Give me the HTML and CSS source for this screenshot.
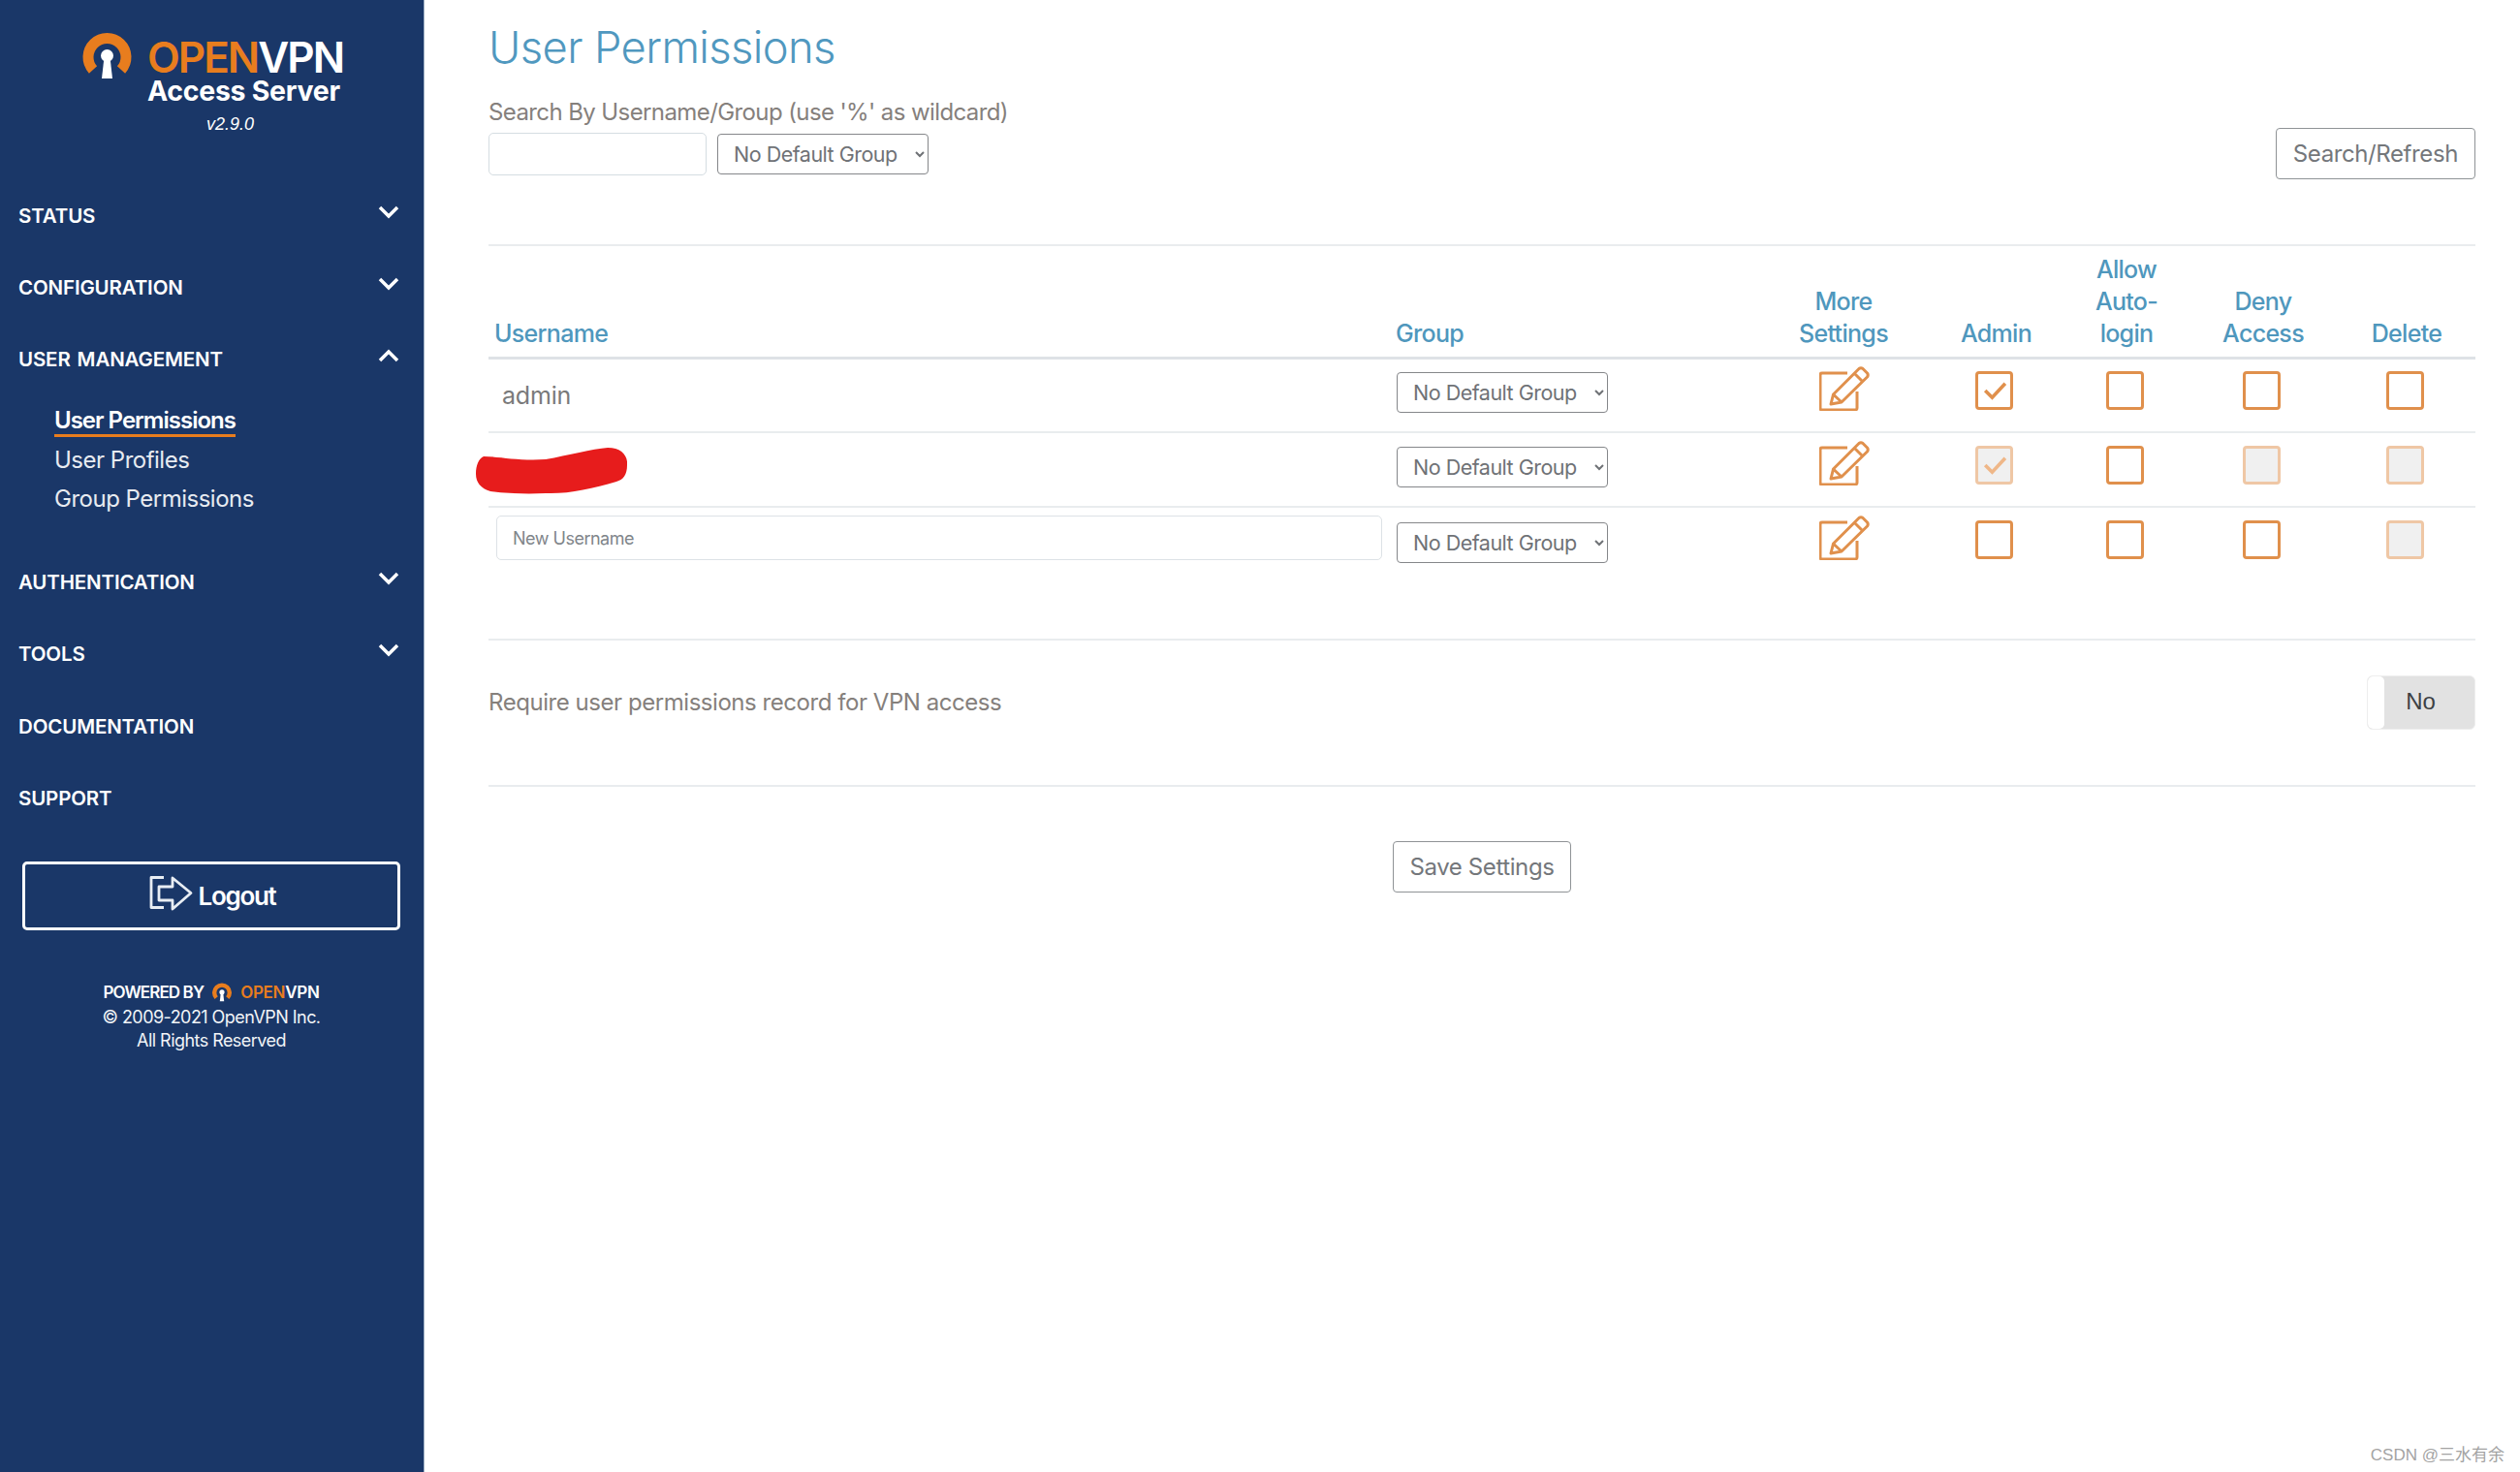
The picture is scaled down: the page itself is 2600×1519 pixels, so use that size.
FILE: index.html
```html
<!DOCTYPE html>
<html lang="en">
<head>
<meta charset="utf-8">
<title>User Permissions</title>
<link rel="stylesheet" href="styles.css">
</head>
<body>
<div class="app">
  <aside class="sidebar">
    <div class="brand">
      <svg class="ring" viewBox="0 0 50 50"><path d="M10.5 39A19.5 19.5 0 1 1 39.500 39" fill="none" stroke="#e87d1e" stroke-width="11"/><circle cx="25" cy="24.500" r="6.500" fill="#fff"/><path d="M22 26h6l2.500 22h-11z" fill="#fff"/></svg>
      <div class="brand-text">
        <div class="brand-name"><span class="orange">OPEN</span>VPN</div>
        <div class="brand-sub">Access Server</div>
      </div>
    </div>
    <div class="version">v2.9.0</div>
    <nav class="nav">
      <div class="nav-item"><span>STATUS</span><svg class="chev" viewBox="0 0 22 14"><path d="M2 2l9 9 9-9"/></svg></div>
      <div class="nav-item"><span>CONFIGURATION</span><svg class="chev" viewBox="0 0 22 14"><path d="M2 2l9 9 9-9"/></svg></div>
      <div class="nav-item"><span class="wide">USER MANAGEMENT</span><svg class="chev" viewBox="0 0 22 14"><path d="M2 12l9-9 9 9"/></svg></div>
      <div class="subnav">
        <div class="sub-item"><span class="active">User Permissions</span></div>
        <div class="sub-item">User Profiles</div>
        <div class="sub-item">Group Permissions</div>
      </div>
      <div class="nav-item"><span>AUTHENTICATION</span><svg class="chev" viewBox="0 0 22 14"><path d="M2 2l9 9 9-9"/></svg></div>
      <div class="nav-item"><span>TOOLS</span><svg class="chev" viewBox="0 0 22 14"><path d="M2 2l9 9 9-9"/></svg></div>
      <div class="nav-item"><span>DOCUMENTATION</span></div>
      <div class="nav-item"><span>SUPPORT</span></div>
    </nav>
    <div class="logout">
      <svg class="logout-icon" viewBox="0 0 46 36"><path d="M15 1.500H2v31h13"/><path d="M10 11h14V2l19 15.500L24 34v-9H10z"/></svg>
      <span>Logout</span>
    </div>
    <div class="powered">
      <div class="powered-line">POWERED BY
        <svg class="ring-small" viewBox="0 0 50 50"><path d="M10.5 39A19.5 19.5 0 1 1 39.500 39" fill="none" stroke="#e87d1e" stroke-width="11"/><circle cx="25" cy="24.500" r="6.500" fill="#fff"/><path d="M22 26h6l2.500 22h-11z" fill="#fff"/></svg>
        <span class="powered-logo"><span class="orange">OPEN</span>VPN</span>
      </div>
      <div>© 2009-2021 OpenVPN Inc.</div>
      <div>All Rights Reserved</div>
    </div>
  </aside>
  <main class="main">
    <h1 class="title">User Permissions</h1>
    <div class="search-label">Search By Username/Group (use '%' as wildcard)</div>
    <div class="search-row">
      <input class="search-input" type="text">
      <select class="select"><option>No Default Group</option></select>
      <button class="btn btn-right" type="button">Search/Refresh</button>
    </div>
    <hr class="rule rule-top">
    <table class="users">
      <thead>
        <tr>
          <th class="left c-user">Username</th>
          <th class="left c-group">Group</th>
          <th class="c-more">More<br>Settings</th>
          <th class="c-admin">Admin</th>
          <th class="c-auto">Allow<br>Auto-<br>login</th>
          <th class="c-deny">Deny<br>Access</th>
          <th class="c-del">Delete</th>
        </tr>
      </thead>
      <tbody>
        <tr>
          <td class="name">admin</td>
          <td class="grp"><select class="select"><option>No Default Group</option></select></td>
          <td><svg class="edit" viewBox="0 0 52 46"><path d="M29 7H3Q1 7 1 9v34q0 2 2 2h34q2 0 2-2V26"/><path d="M12 39l2.500-10L41 2.500q2-1.500 4 0l4.500 4.500q1.500 2 0 4L23 37zM14.500 29l8.500 8M36 7l9 9"/></svg></td>
          <td><span class="box"><svg class="tick" viewBox="0 0 32 32"><path d="M7 16l7 7L27 9"/></svg></span></td>
          <td><span class="box"></span></td>
          <td><span class="box"></span></td>
          <td><span class="box"></span></td>
        </tr>
        <tr>
          <td class="name redacted"><svg class="blob" viewBox="0 0 156 48"><path d="M8 9C25 9 45 14 72 12C95 8 120 1 136 0C150 0 157 8 156 18C156 28 152 33 145 35C120 42 95 48 72 47C50 48 30 47 15 45C5 42 0 36 0 27C0 18 3 11 8 9Z"/></svg></td>
          <td class="grp"><select class="select"><option>No Default Group</option></select></td>
          <td><svg class="edit" viewBox="0 0 52 46"><path d="M29 7H3Q1 7 1 9v34q0 2 2 2h34q2 0 2-2V26"/><path d="M12 39l2.500-10L41 2.500q2-1.500 4 0l4.500 4.500q1.500 2 0 4L23 37zM14.500 29l8.500 8M36 7l9 9"/></svg></td>
          <td><span class="box off"><svg class="tick" viewBox="0 0 32 32"><path d="M7 16l7 7L27 9"/></svg></span></td>
          <td><span class="box"></span></td>
          <td><span class="box off"></span></td>
          <td><span class="box off"></span></td>
        </tr>
        <tr>
          <td class="new"><input class="new-input" type="text" placeholder="New Username"></td>
          <td class="grp"><select class="select"><option>No Default Group</option></select></td>
          <td><svg class="edit" viewBox="0 0 52 46"><path d="M29 7H3Q1 7 1 9v34q0 2 2 2h34q2 0 2-2V26"/><path d="M12 39l2.500-10L41 2.500q2-1.500 4 0l4.500 4.500q1.500 2 0 4L23 37zM14.500 29l8.500 8M36 7l9 9"/></svg></td>
          <td><span class="box"></span></td>
          <td><span class="box"></span></td>
          <td><span class="box"></span></td>
          <td><span class="box off"></span></td>
        </tr>
      </tbody>
    </table>
    <hr class="rule rule-mid">
    <div class="require">
      <span>Require user permissions record for VPN access</span>
      <div class="toggle"><span class="knob"></span><span class="toggle-label">No</span></div>
    </div>
    <hr class="rule rule-end">
    <div class="save-row"><button class="btn" type="button">Save Settings</button></div>
  </main>
</div>
<div class="watermark">CSDN @三水有余</div>
</body>
</html>
```
FILE: styles.css
```css
* { box-sizing: border-box; }
html, body { margin: 0; height: 100%; }
body { font-family: Inter, "Open Sans", sans-serif; color: #7a7a7a; background: #fff; position: relative; overflow: hidden; }
.app { display: flex; height: 1519px; }
.sidebar { width: 438px; flex: none; background: #1a3768; border-right: 1px solid #9fb0c4; color: #fff; display: flex; flex-direction: column; }
.orange { color: #e87d1e; }
.brand { display: flex; padding: 33px 0 0 85px; gap: 16px; height: 107px; }
.ring { width: 51px; height: 50px; flex: none; }
.brand-text { display: flex; flex-direction: column; }
.brand-name { font-size: 44px; line-height: 46px; font-weight: 600; letter-spacing: -2px; margin-top: 3px; }
.brand-sub { font-size: 28.500px; line-height: 30px; font-weight: 700; margin-top: -3px; letter-spacing: -.300px; }
.version { font-family: "Liberation Sans", sans-serif; font-style: italic; font-size: 18px; line-height: 22px; padding-left: 213px; margin-top: 10px; }
.nav { display: flex; flex-direction: column; margin-top: 46px; }
.nav-item { height: 74.300px; display: flex; align-items: center; justify-content: space-between; padding: 0 25px 0 19px; font-size: 20.500px; font-weight: 600; letter-spacing: -.150px; }
.wide { word-spacing: 2px; }
.chev { width: 22px; height: 14px; margin-top: -7px; fill: none; stroke: #fff; stroke-width: 3.500; }
.subnav { display: flex; flex-direction: column; padding-left: 56px; margin-top: 6.500px; margin-bottom: 27.500px; }
.sub-item { height: 40.500px; font-size: 24px; line-height: 40px; letter-spacing: -.500px; color: #e7ebf1; }
.active { color: #fff; font-weight: 600; border-bottom: 3px solid #e87d1e; letter-spacing: -1px; padding-bottom: 0; }
.logout { margin: 28.500px 24px 0 23px; height: 71px; border: 3px solid #fff; border-radius: 5px; display: flex; align-items: center; justify-content: center; gap: 5px; font-size: 26px; font-weight: 600; letter-spacing: -1.300px; padding-left: 2px; }
.logout-icon { width: 46px; height: 36px; fill: none; stroke: #e8edf3; stroke-width: 2.800; stroke-linejoin: round; margin-top: -6px; }
.powered { margin-top: 50.500px; text-align: center; font-size: 18px; line-height: 24px; padding-right: 1px; letter-spacing: -.550px; color: #f1f4f7; }
.powered-line { display: flex; justify-content: center; align-items: center; gap: 9px; font-size: 17px; font-weight: 600; letter-spacing: -.900px; line-height: 27px; color: #fff; }
.ring-small { width: 20px; height: 20px; }
.powered-logo { font-size: 17px; letter-spacing: -.300px; }
.main { flex: 1; padding: 0 46px 0 66px; min-width: 0; }
.title { margin: 0; padding-top: 21px; font-size: 45.300px; line-height: 56px; font-weight: 300; color: #5098bf; letter-spacing: -.600px; }
.search-label { margin-top: 23.500px; font-size: 24px; line-height: 30px; color: #85807c; letter-spacing: -.600px; }
.search-row { display: flex; align-items: center; margin-top: 1px; height: 54px; }
.search-input { width: 225px; height: 44px; margin-right: 11px; border: 1px solid #d5dde2; border-radius: 5px; background: #fff; }
.select { width: 218px; height: 42px; padding: 0 0 0 12px; border: 1px solid #85878a; border-radius: 4px; background: #fff; color: #6f7276; font-family: Inter, sans-serif; font-size: 21.500px; letter-spacing: -.500px; }
.btn { height: 53px; padding: 0 17px; border: 1px solid #8f9396; border-radius: 4px; background: #fff; color: #74777b; font-family: Inter, sans-serif; font-size: 24px; letter-spacing: -.400px; }
.btn-right { margin-left: auto; }
.rule { margin: 0; border: 0; border-top: 2px solid #e9ecee; }
.rule-top { margin-top: 66.500px; }
.users { width: 100%; border-collapse: collapse; table-layout: fixed; margin-top: 0; }
.users th { font-size: 25px; line-height: 33px; font-weight: 500; color: #4f97bd; letter-spacing: -.700px; padding: 0 0 7px; vertical-align: bottom; text-align: center; border-bottom: 3px solid #dee2e6; height: 115px; }
.users th.left { text-align: left; padding-left: 6px; }
.users td { height: 77px; padding: 0 4px 10px 0; text-align: center; vertical-align: middle; border-bottom: 2px solid #e9ecee; }
.users tbody tr:last-child td { border-bottom: 0; }
.c-user { width: 930px; }
.c-group { width: 381px; }
.c-more { width: 174px; }
.c-admin { width: 141px; }
.c-auto { width: 128px; }
.c-deny { width: 154px; }
.c-del { width: 142px; }
.users td.name { text-align: left; padding: 0 0 0 14px; font-size: 25px; color: #7a7a7a; letter-spacing: -.200px; }
.users td.grp { text-align: left; padding: 0 0 5px 7px; }
.users td.new { padding: 0 0 0 8px; text-align: left; }
.redacted { position: relative; }
.blob { position: absolute; left: -13px; top: 15px; width: 156px; height: 48px; fill: #e71c1c; }
.new-input { display: block; width: 914px; height: 46px; margin-bottom: 14px; padding: 0 16px; border: 1px solid #dde2e6; border-radius: 5px; font-family: Inter, sans-serif; font-size: 18px; letter-spacing: -.500px; }
.new-input::placeholder { color: #80858a; opacity: 1; }
.edit { display: inline-block; width: 52px; height: 46px; margin: 0 0 4px 5px; fill: none; stroke: #e0904c; stroke-width: 3; stroke-linejoin: round; vertical-align: middle; }
.box { display: inline-block; width: 39px; height: 40px; border: 3px solid #e0904c; border-radius: 4px; background: #fff; vertical-align: middle; }
.tick { display: block; width: 33px; height: 34px; fill: none; stroke: #e0904c; stroke-width: 3.500; }
.off { border-color: #efc7a5; background: #f0f0f0; }
.off .tick { stroke: #efb788; }
.rule-mid { margin-top: 59px; }
.require { display: flex; align-items: center; justify-content: space-between; height: 149px; padding-bottom: 22px; font-size: 24px; letter-spacing: -.450px; color: #85807c; }
.toggle { width: 112px; height: 56px; background: #e2e2e2; border: 1px solid #eee; border-radius: 6px; display: flex; align-items: center; overflow: hidden; }
.knob { width: 17px; height: 100%; background: #fff; border-radius: 5px; flex: none; }
.toggle-label { flex: 1; text-align: center; font-family: "Liberation Sans", sans-serif; font-size: 24px; letter-spacing: 0; color: #3d4145; padding-bottom: 2px; padding-right: 18px; }
.save-row { display: flex; justify-content: center; margin-top: 56px; }
.watermark { position: absolute; right: 16px; bottom: 7px; font-family: "Liberation Sans", "Noto Sans CJK SC", sans-serif; font-size: 17px; color: #a3a3a3; }
```
